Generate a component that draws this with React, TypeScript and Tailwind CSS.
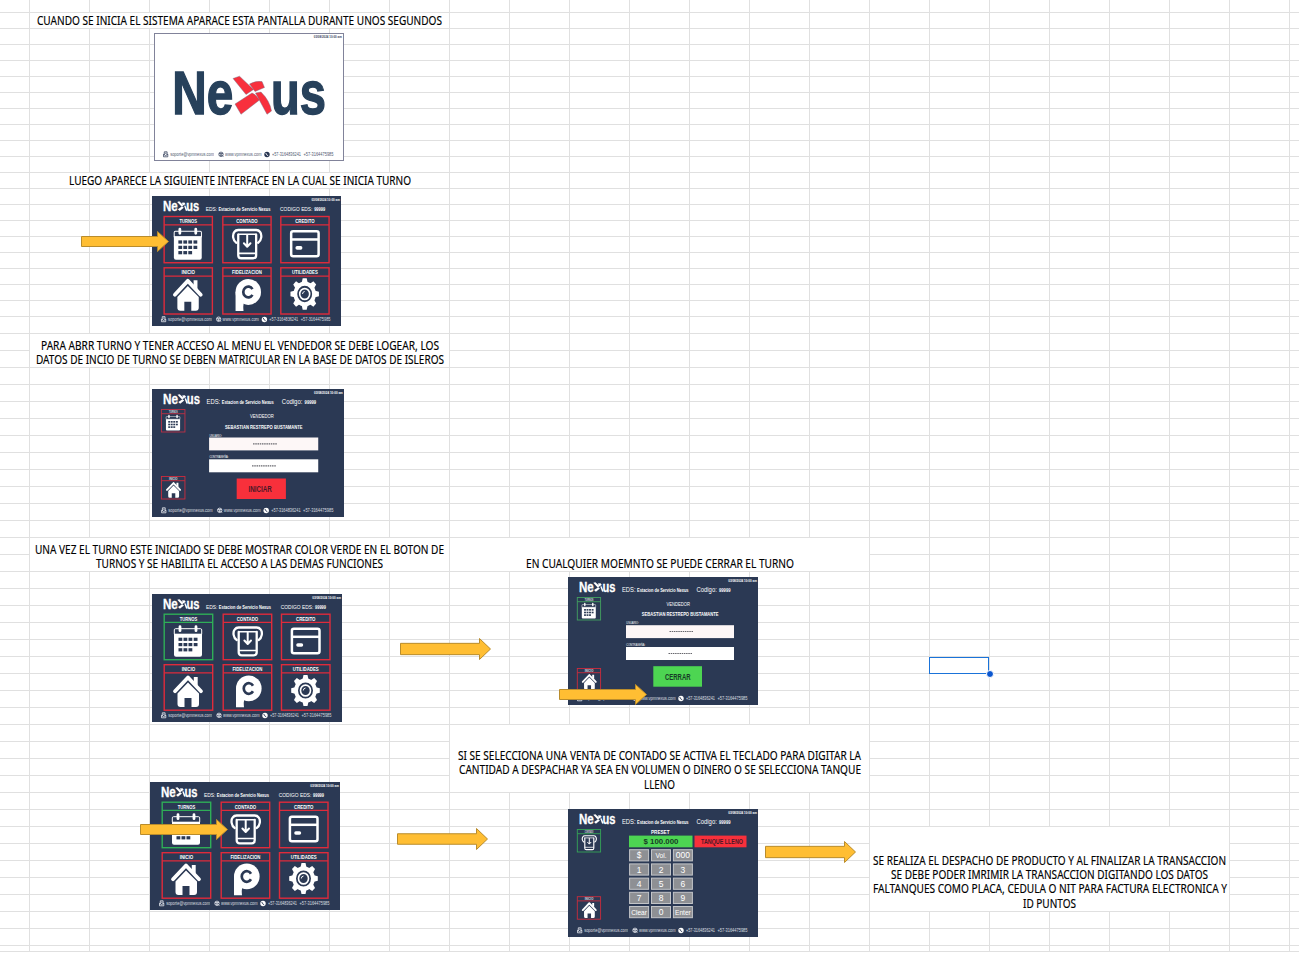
import React from "react";

const COLS = 23;
const ROWS = 58;

type Merge = { row: number; col: number; rows: number; cols: number; lines: [string, number][]; pitch: number };

const merges: Merge[] = [
  { row: 1, col: 1, rows: 1, cols: 7, pitch: 14, lines: [["CUANDO SE INICIA EL SISTEMA APARACE ESTA PANTALLA DURANTE UNOS SEGUNDOS", 405]] },
  { row: 11, col: 1, rows: 1, cols: 7, pitch: 14, lines: [["LUEGO APARECE LA SIGUIENTE INTERFACE EN LA CUAL SE INICIA TURNO", 342]] },
  { row: 21, col: 1, rows: 2, cols: 7, pitch: 14, lines: [["PARA ABRR TURNO Y TENER ACCESO AL MENU EL VENDEDOR SE DEBE LOGEAR, LOS", 398], ["DATOS DE INCIO DE TURNO SE DEBEN MATRICULAR EN LA BASE DE DATOS DE ISLEROS", 408]] },
  { row: 33, col: 1, rows: 2, cols: 7, pitch: 14, lines: [["UNA VEZ EL TURNO ESTE INICIADO SE DEBE MOSTRAR COLOR VERDE EN EL BOTON DE", 409], ["TURNOS Y SE HABILITA EL ACCESO A LAS DEMAS FUNCIONES", 287]] },
  { row: 33, col: 8, rows: 2, cols: 7, pitch: 14, lines: [["EN CUALQUIER MOEMNTO SE PUEDE CERRAR EL TURNO", 268]] },
  { row: 44, col: 8, rows: 4, cols: 7, pitch: 14.5, lines: [["SI SE SELECCIONA UNA VENTA DE CONTADO SE ACTIVA EL TECLADO PARA DIGITAR LA", 403], ["CANTIDAD A DESPACHAR YA SEA EN VOLUMEN O DINERO O SE SELECCIONA TANQUE", 402], ["LLENO", 31]] },
  { row: 50, col: 15, rows: 5, cols: 6, pitch: 14.3, lines: [["SE REALIZA EL DESPACHO DE PRODUCTO Y AL FINALIZAR LA TRANSACCION", 353], ["SE DEBE PODER IMRIMIR LA TRANSACCION DIGITANDO LOS DATOS", 317], ["FALTANQUES COMO PLACA, CEDULA O NIT PARA FACTURA ELECTRONICA Y", 354], ["ID PUNTOS", 53]] },
];

const covered = (r: number, c: number) =>
  merges.some((m) => r >= m.row && r < m.row + m.rows && c >= m.col && c < m.col + m.cols);

function Sheet() {
  const cells: React.ReactNode[] = [];
  for (let r = 0; r < ROWS; r++)
    for (let c = 0; c < COLS; c++)
      if (!covered(r, c))
        cells.push(<div key={`${r}-${c}`} className="border-b border-r border-[#e0e0e0]" style={{ gridRow: r + 1, gridColumn: c + 1 }} />);
  return (
    <div className="grid grid-cols-[30px_repeat(21,60px)_10px] grid-rows-[13px_repeat(19,16px)_repeat(37,17px)_6px]">
      {cells}
      {merges.map((m, i) => (
        <div
          key={i}
          className="flex flex-col items-center justify-end border-b border-r border-[#e0e0e0] pb-px font-['Noto_Sans',sans-serif] text-[11.7px] text-black"
          style={{ gridRow: `${m.row + 1} / span ${m.rows}`, gridColumn: `${m.col + 1} / span ${m.cols}` }}
        >
          {m.lines.map(([text, width]) => (
            <svg key={text} className="block shrink-0 overflow-visible" width={width} height={m.pitch}>
              <text x="0" y="12" textLength={width} lengthAdjust="spacingAndGlyphs" fill="#000" stroke="#000" strokeWidth=".15">{text}</text>
            </svg>
          ))}
        </div>
      ))}
    </div>
  );
}

/* Text fitted to a fixed width inside the drawings */
function T({ x, y, w, s, b, fill = "#fff", o = 1, children }: { x: number; y: number; w: number; s: number; b?: boolean; fill?: string; o?: number; children: string }) {
  return (
    <text x={x} y={y} textLength={w} lengthAdjust="spacingAndGlyphs" fontSize={s} fontWeight={b ? 700 : 400} fill={fill} opacity={o}>
      {children}
    </text>
  );
}

function Footer({ dark }: { dark?: boolean }) {
  const f = dark ? "#3d4963" : "#e6e9ef";
  return (
    <g>
      <g fill="none" stroke={f} strokeWidth=".8">
        <path d="M9.500 121.200v2.600h4.300v-2.600M10.300 122v-3.200h2.800v3.200M9.500 121.300l2.200 1.300 2.100-1.300M11 120.200h1.500" />
        <circle cx="67" cy="121.300" r="2.200" />
        <path d="M65 120.500h4M65.500 122.200h2M67 121.300l2.300 2.400M67 121.300v2" />
      </g>
      <circle cx="113" cy="121.500" r="2.700" fill={dark ? "#25334f" : "#fff"} />
      <path d="M111.800 120q.3 2 2.400 2.800" stroke={dark ? "#fff" : "#2b3954"} strokeWidth=".9" fill="none" />
      <T x={16.200} y={123.200} w={43.800} s={5.200} fill={f} o={0.9}>soporte@vpmnexus.com</T>
      <T x={71} y={123.200} w={36.500} s={5.200} fill={f} o={0.9}>www.vpmnexus.com</T>
      <T x={118} y={123.200} w={29} s={5.200} fill={f} o={0.9}>+57-3164836241</T>
      <T x={149.500} y={123.200} w={30} s={5.200} fill={f} o={0.9}>+57-3164475985</T>
    </g>
  );
}

function Header({ menu }: { menu?: boolean }) {
  return (
    <>
      <g stroke="#fff" strokeWidth=".3">
        <T x={11} y={14.600} w={14.800} s={14} b>Ne</T>
        <T x={34.400} y={14.600} w={13} s={14} b>us</T>
      </g>
      <g fill="#fff">
        <path d="M25.300 5.800l2.100-.6 4.300 4.100-2 1.100zM29.800 6.600l2.700-.3 1.300 1.800-2.400 1.100zM26 13l4.300-2.800 1.600 1.400-4 3.200zM32.200 9.600l1.400-.3 2 4.900-1.500.6z" />
      </g>
      {menu ? (
        <>
          <T x={54} y={14.800} w={11.500} s={6.100}>EDS:</T>
          <T x={66.800} y={14.600} w={52.200} s={4.800} b>Estacion de Servicio Nexus</T>
          <T x={128.800} y={14.800} w={32.500} s={6.100}>CODIGO EDS:</T>
          <T x={163} y={14.800} w={11} s={4.800} b>99999</T>
        </>
      ) : (
        <>
          <T x={54} y={14.800} w={13.500} s={6.900}>EDS:</T>
          <T x={69} y={14.600} w={51.500} s={4.800} b>Estacion de Servicio Nexus</T>
          <T x={128.500} y={14.800} w={20.300} s={6.900}>Codigo:</T>
          <T x={151} y={14.600} w={11.500} s={4.800} b>99999</T>
        </>
      )}
      <T x={160.300} y={4.900} w={28.500} s={3.700} b>03/08/2024 10:00 am</T>
    </>
  );
}

const Calendar = () => (
  <g>
    <path d="M1.500 3.500h25a1.200 1.200 0 0 1 1.200 1.200V9H.3V4.700a1.200 1.200 0 0 1 1.200-1.200z" fill="none" stroke="#fff" strokeWidth="1" />
    <path d="M0 8.700h28v20.800a2 2 0 0 1-2 2H2a2 2 0 0 1-2-2z" fill="#fff" />
    <path d="M6 1.500v4M22 1.500v4" stroke="#fff" strokeWidth="2.800" strokeLinecap="round" />
    <g fill="#2b3954">
      {[12.500, 17.800, 23].map((y, r) =>
        [4.500, 9.500, 14.500, 19.700].map((x, c) => (r === 2 && c === 3 ? null : <rect key={`${x}-${y}`} x={x} y={y} width="3.800" height="3.200" />)),
      )}
    </g>
  </g>
);

const Cash = () => (
  <g fill="none" stroke="#fff" strokeWidth="2.300" strokeLinecap="round" strokeLinejoin="round">
    <path d="M4 14.500C.5 12.500 0 6.500 2 4Q3.500 2 6 2h18q2.500 0 4 2C30 6.500 29.500 12.500 26 14.500" />
    <path d="M6 6.200h18" strokeWidth="1.500" />
    <path d="M6 6.500v20.300q0 3 3 3h12q3 0 3-3V6.500" />
    <path d="M6.500 25h17" strokeWidth="1.600" />
    <path d="M15 7v11M11.700 15l3.300 3.500 3.300-3.500" strokeWidth="2" />
  </g>
);

const Card = () => (
  <g fill="none" stroke="#fff" strokeWidth="2.500">
    <rect x="1.200" y="1.200" width="27.600" height="24.600" rx="2" />
    <path d="M1 9.300h28" strokeWidth="2.500" />
    <rect x="5.500" y="15.800" width="7" height="3.500" rx="1.700" fill="#fff" stroke="none" />
  </g>
);

const House = () => (
  <g>
    <path d="M2 16.200L15 2.500l13 13.700" fill="none" stroke="#fff" strokeWidth="3.800" strokeLinecap="round" strokeLinejoin="round" />
    <path d="M20.800 2h3.900v9l-3.900-4z" fill="#fff" />
    <path d="M15 7.500l11 11v10.500q0 3-3 3h-4.500v-9h-7v9H7.500q-3 0-3-3V18.500z" fill="#fff" />
  </g>
);

const Points = () => (
  <g>
    <circle cx="12.800" cy="13.200" r="12.800" fill="#fff" />
    <path d="M0 13h8v13q-.5 1 0 6H0z" fill="#fff" />
    <path d="M17 10.500a5 5.300 0 1 0 0 5.600" fill="none" stroke="#2b3954" strokeWidth="2.700" />
  </g>
);

const Gear = () => (
  <g fill="none" stroke="#fff" transform="translate(0 -1.200) scale(1 1.080)">
    {[0, 45, 90, 135, 180, 225, 270, 315].map((a) => (
      <path key={a} d="M10.800 5.500L12 .7h4l1.200 4.800z" fill="#fff" stroke="none" transform={`rotate(${a} 14 15)`} />
    ))}
    <circle cx="14" cy="15" r="9.400" strokeWidth="3.800" />
    <circle cx="14" cy="15" r="5" strokeWidth="1.600" />
    <path d="M11.800 15q0-2 2.200-2.300" strokeWidth=".9" />
  </g>
);

const tiles = [
  { label: "TURNOS", lw: 17.500, icon: <Calendar />, ix: 22, iy: 31.200 },
  { label: "CONTADO", lw: 21.500, icon: <Cash />, ix: 80.700, iy: 31.500 },
  { label: "CREDITO", lw: 19.500, icon: <Card />, ix: 138.700, iy: 33.500 },
  { label: "INICIO", lw: 13.500, icon: <House />, ix: 21, iy: 81 },
  { label: "FIDELIZACION", lw: 30, icon: <Points />, ix: 84, iy: 81.200 },
  { label: "UTILIDADES", lw: 26, icon: <Gear />, ix: 139.500, iy: 81.500 },
];

const frame = "absolute bg-[#2b3954] font-['Liberation_Sans',sans-serif]";

function MenuScreen({ place, active }: { place: string; active?: boolean }) {
  return (
    <div className={`${frame} ${place}`}>
      <svg className="block size-full overflow-visible" viewBox="0 0 190 128" preserveAspectRatio="none">
        <Header menu />
        {tiles.map((t, i) => {
          const x = [12.200, 71.200, 129.500][i % 3];
          const y = i < 3 ? 20.200 : 70.700;
          return (
            <g key={t.label}>
              <g fill="none" stroke={active && i === 0 ? "#2fae57" : "#df2b3b"} strokeWidth="1.400">
                <rect x={x} y={y} width="48.500" height="45.500" />
                <path d={`M${x} ${y + 8.200}h48.500`} />
              </g>
              <T x={x + 24.250 - t.lw / 2} y={y + 6.500} w={t.lw} s={5.600} b>{t.label}</T>
              <g transform={`translate(${t.ix} ${t.iy})`}>{t.icon}</g>
            </g>
          );
        })}
        <Footer />
      </svg>
    </div>
  );
}

function SideTile({ y, color, label, children }: { y: number; color: string; label: string; children: React.ReactNode }) {
  return (
    <g>
      <g fill="none" stroke={color} strokeWidth=".9">
        <rect x="9.300" y={y} width="23.300" height="22.500" />
        <path d={`M9.300 ${y + 4.200}h23.300`} />
      </g>
      <T x={16.800} y={y + 3.200} w={8.500} s={2.800} b o={0.8}>{label}</T>
      <g transform={`translate(13.800 ${y + 5.300}) scale(.5)`}>{children}</g>
    </g>
  );
}

function LoginScreen({ place, open }: { place: string; open?: boolean }) {
  return (
    <div className={`${frame} ${place}`}>
      <svg className="block size-full overflow-visible" viewBox="0 0 190 128" preserveAspectRatio="none">
        <Header />
        <SideTile y={20.500} color={open ? "#43a060" : "#bd3045"} label="TURNOS"><Calendar /></SideTile>
        <SideTile y={open ? 91.500 : 87.500} color="#cc2c3d" label="INICIO"><House /></SideTile>
        <g transform={open ? "translate(0 0)" : "translate(-1.500 .3)"}>
          <T x={98.500} y={28.800} w={23.500} s={5.500}>VENDEDOR</T>
          <T x={73.800} y={39.300} w={76.700} s={5.300} b>SEBASTIAN RESTREPO BUSTAMANTE</T>
          <T x={58.300} y={47.300} w={12.500} s={3.300}>USUARIO:</T>
          <rect x="58" y="48.200" width="108" height="12.900" fill="#fdf7f7" />
          <T x={58.300} y={69} w={19} s={3.300}>CONTRASEÑA:</T>
          <rect x="58" y="70" width="108" height="13" fill="#fff" />
          <path d="M101.500 54.500h24M100.500 76.500h24" stroke="#66666c" strokeWidth="1.200" strokeDasharray="1.500 .7" />
          <rect x="85.300" y="89.200" width="48.700" height="20.500" fill={open ? "#4dd552" : "#f8303b"} />
          <T x={open ? 97 : 97} y={102.500} w={open ? 25.500 : 23} s={8.200} b fill={open ? "#173c26" : "#4c1827"}>{open ? "CERRAR" : "INICIAR"}</T>
        </g>
        <Footer />
      </svg>
    </div>
  );
}

const keys = ["$", "Vol.", "000", "1", "2", "3", "4", "5", "6", "7", "8", "9", "Clear", "0", "Enter"];

function KeypadScreen({ place }: { place: string }) {
  return (
    <div className={`${frame} ${place}`}>
      <svg className="block size-full overflow-visible" viewBox="0 0 190 128" preserveAspectRatio="none">
        <Header />
        <SideTile y={20.500} color="#36a457" label="CONTADO"><Cash /></SideTile>
        <SideTile y={87.700} color="#c92c3d" label="INICIO"><House /></SideTile>
        <T x={83} y={24.700} w={18.500} s={4.800} b>PRESET</T>
        <rect x="61" y="26.600" width="63.500" height="11.700" fill="#4dd552" />
        <T x={75.500} y={35.200} w={35} s={7.800} b fill="#173c26">$ 100.000</T>
        <rect x="126.500" y="26.600" width="52" height="11.700" fill="#f8303b" />
        <T x={133} y={35.100} w={42} s={7.400} b fill="#4c1827">TANQUE LLENO</T>
        {keys.map((k, i) => {
          const x = 61.600 + (i % 3) * 21.900;
          const y = 40.700 + Math.floor(i / 3) * 14.200;
          const long = k.length > 3;
          return (
            <g key={k}>
              <rect x={x} y={y} width="19" height="11.200" fill="#8e9094" stroke="#c3c5c8" strokeWidth="1" />
              <text x={x + 9.500} y={y + (long ? 8 : 8.600)} textAnchor="middle" fontSize={long ? 6.600 : 8.500} fill="#fff">{k}</text>
            </g>
          );
        })}
        <Footer />
      </svg>
    </div>
  );
}

function Splash() {
  return (
    <div className="absolute left-[154px] top-[33px] h-[128px] w-[190px] border border-[#81839a] bg-white font-['Liberation_Sans',sans-serif]">
      <svg className="block size-full overflow-visible" viewBox="1 1 188 126">
        <g stroke="#27415b" strokeWidth="1.400">
          <T x={18.200} y={81} w={61} s={61} b fill="#27415b">Ne</T>
          <T x={117} y={81} w={55} s={61} b fill="#27415b">us</T>
        </g>
        <g fill="#f8303d" stroke="#667086" strokeWidth=".4">
          <path d="M79 45.500l6.500-2.300L99.500 56.500l-7.500 5z" />
          <path d="M95.500 51q6-3.500 12.500-2.500l2.500 6-9.500 4z" />
          <path d="M81 71l17-11q4.500 1.500 7.500 7L87 81.300z" />
          <path d="M101.500 60l5.500-1q9 9 10.500 19l-4.500 3.300z" />
        </g>
        <T x={159.800} y={4.700} w={28} s={3.700} b fill="#39445c">03/08/2024 10:00 am</T>
        <Footer dark />
      </svg>
    </div>
  );
}

function Arrow({ place, w = 91, h = 22, body = 11.300 }: { place: string; w?: number; h?: number; body?: number }) {
  const mid = h / 2;
  return (
    <svg className={`absolute overflow-visible ${place}`} width={w} height={h}>
      <path
        d={`M.5 ${mid - body / 2}H${w - 11.500}V.5L${w - 0.500} ${mid} ${w - 11.500} ${h - 0.500}V${mid + body / 2}H.5z`}
        fill="#ffbe33"
        stroke="#b98c2c"
      />
    </svg>
  );
}

export default function App() {
  return (
    <main className="relative h-[959px] w-[1299px] overflow-hidden bg-white">
      <Sheet />
      <Splash />
      <MenuScreen place="left-[152px] top-[196px] h-[130px] w-[189px]" />
      <LoginScreen place="left-[152px] top-[389px] h-[128px] w-[192px]" />
      <MenuScreen place="left-[152px] top-[594px] h-[128px] w-[190px]" active />
      <LoginScreen place="left-[568px] top-[577px] h-[128px] w-[190px]" open />
      <MenuScreen place="left-[150px] top-[782px] h-[128px] w-[190px]" active />
      <KeypadScreen place="left-[568px] top-[809px] h-[128px] w-[190px]" />
      <Arrow place="left-[81px] top-[230.5px]" w={88} h={21} body={10} />
      <Arrow place="left-[400px] top-[638px]" />
      <Arrow place="left-[559px] top-[683.5px]" w={88} h={21} body={10} />
      <Arrow place="left-[140px] top-[818.5px]" w={88} h={21} body={10} />
      <Arrow place="left-[397px] top-[828px]" body={10.500} />
      <Arrow place="left-[765px] top-[841px]" />
      <div className="absolute left-[929px] top-[657px] h-[17px] w-[60px] border border-[#1a73d9]" />
      <div className="absolute left-[986px] top-[670px] size-[8px] rounded-full border border-white bg-[#0b57d0]" />
    </main>
  );
}
